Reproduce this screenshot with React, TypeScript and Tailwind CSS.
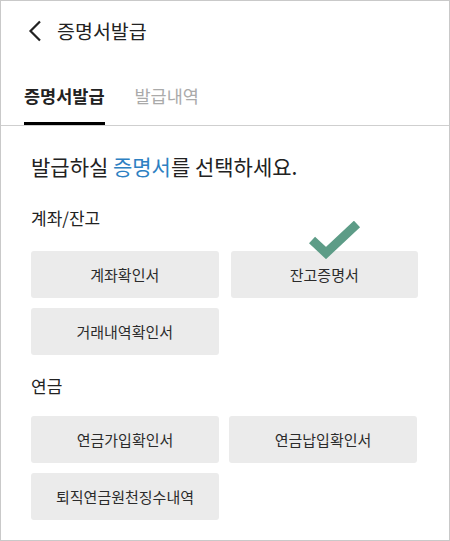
const FONT = "font-['Noto_Sans_CJK_KR','Noto_Sans',sans-serif]";

function Chevron() {
  return (
    <svg width="14" height="22" viewBox="0 0 14 22" fill="none">
      <path d="M12 1.5 L2.5 11 L12 20.5" stroke="#222" strokeWidth="2.2" />
    </svg>
  );
}

function Check() {
  return (
    <svg
      width="52"
      height="38"
      viewBox="0 0 52 38"
      className="pointer-events-none absolute left-[78px] top-[-30px]"
    >
      <path d="M3 19 L17 32 L48 3" stroke="#5d9c87" strokeWidth="9" fill="none" />
    </svg>
  );
}

function DocButton({ label, checked }: { label: string; checked?: boolean }) {
  return (
    <div className="relative flex h-[47px] items-center justify-center rounded-[3px] bg-[#ebebeb] text-[15px] text-[#2b2b2b]">
      {label}
      {checked && <Check />}
    </div>
  );
}

export default function App() {
  return (
    <div className={`${FONT} h-[541px] w-[450px] border border-[#c9c9c9] bg-white text-[#222]`}>
      <div className="flex h-[60px] items-center gap-[15px] pl-[27px]">
        <Chevron />
        <span className="text-[19.5px]">증명서발급</span>
      </div>

      <div className="flex gap-[30px] border-b border-[#cfcfcf] pl-[23px] pt-[22px]">
        <div className="border-b-[3px] border-black pb-[13px] text-[17.5px] font-bold">증명서발급</div>
        <div className="pb-[13px] text-[17.5px] text-[#aaa]">발급내역</div>
      </div>

      <div className="px-[30px] pt-[25px]">
        <h1 className="text-[21px] leading-[30px]">
          발급하실 <span className="text-[#2d80c2]">증명서</span>를 선택하세요.
        </h1>

        <h2 className="mt-[25px] text-[17px] leading-[24px]">계좌/잔고</h2>
        <div className="mt-[21px] grid grid-cols-2 gap-x-[12px] gap-y-[10px] pr-[1px]">
          <DocButton label="계좌확인서" />
          <DocButton label="잔고증명서" checked />
          <DocButton label="거래내역확인서" />
        </div>

        <h2 className="mt-[19px] text-[17px] leading-[24px]">연금</h2>
        <div className="mt-[18px] grid grid-cols-2 gap-x-[10px] gap-y-[10px] pr-[2px]">
          <DocButton label="연금가입확인서" />
          <DocButton label="연금납입확인서" />
          <DocButton label="퇴직연금원천징수내역" />
        </div>
      </div>
    </div>
  );
}
